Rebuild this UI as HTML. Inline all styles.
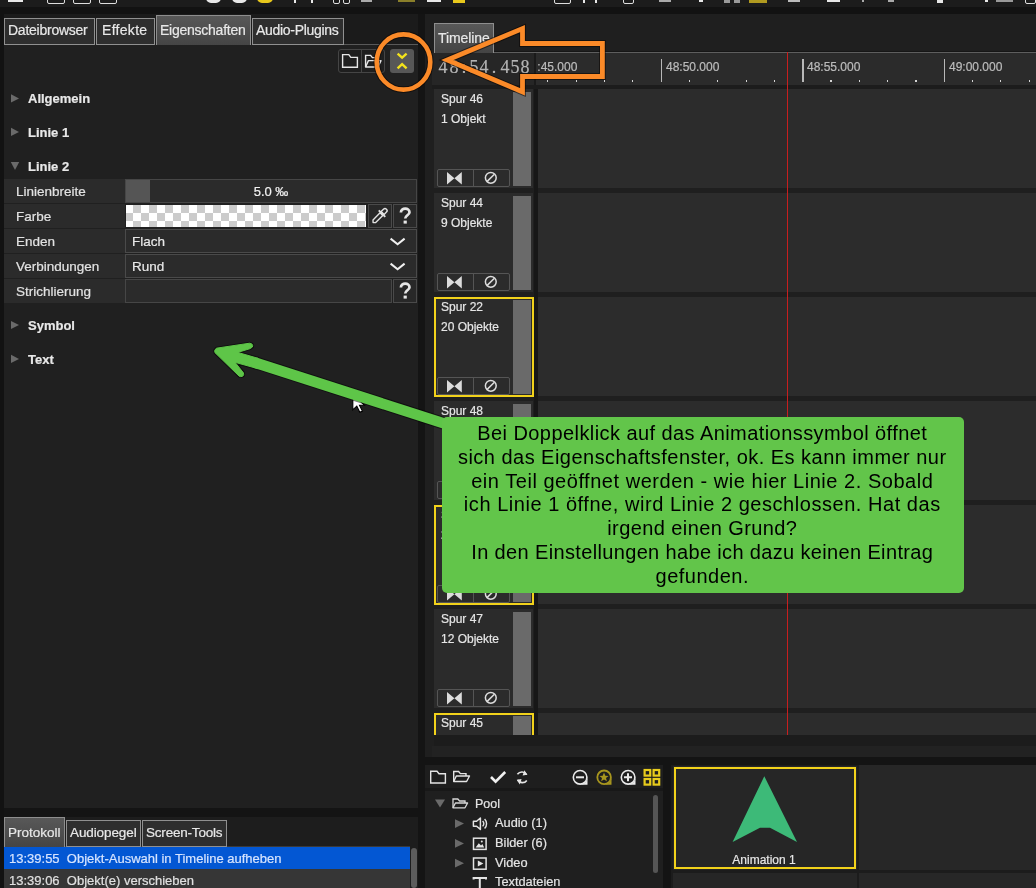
<!DOCTYPE html>
<html><head><meta charset="utf-8"><title>recreation</title><style>
*{margin:0;padding:0;box-sizing:border-box}
html,body{width:1036px;height:888px;overflow:hidden;background:#141414;font-family:"Liberation Sans",sans-serif;color:#e2e2e2}
.a{position:absolute}
.t{white-space:nowrap;will-change:transform;-webkit-text-stroke:0.2px currentColor}
.c{-webkit-text-stroke:0}
svg{position:absolute;overflow:visible}
</style></head><body>

<div class="a" style="left:0px;top:0px;width:1036px;height:7px;background:#1c1c1c"></div>
<div class="a" style="left:0px;top:7px;width:1036px;height:7px;background:#121212"></div>
<div class="a" style="left:8px;top:0px;width:15px;height:1.5px;background:#e8e8e8"></div>
<div class="a" style="left:47px;top:-4px;width:18px;height:8px;border:1.5px solid #dedede;border-radius:2px"></div>
<div class="a" style="left:73px;top:-4px;width:18px;height:8px;border:1.5px solid #dedede;border-radius:2px"></div>
<div class="a" style="left:99px;top:-4px;width:18px;height:8px;border:1.5px solid #dedede;border-radius:2px"></div>
<div class="a" style="left:206px;top:-6px;width:15px;height:9px;border:3px solid #e8e8e8;border-radius:0 0 5px 5px"></div>
<div class="a" style="left:232px;top:-6px;width:15px;height:9px;border:3px solid #e8e8e8;border-radius:0 0 5px 5px"></div>
<div class="a" style="left:257px;top:-6px;width:16px;height:9px;border:3px solid #e8c81c;border-radius:0 0 5px 5px"></div>
<div class="a" style="left:294px;top:0px;width:1.5px;height:3px;background:#e8e8e8"></div>
<div class="a" style="left:311px;top:0px;width:1.5px;height:3px;background:#e8e8e8"></div>
<div class="a" style="left:333px;top:-4px;width:7px;height:8px;border:1.5px solid #dedede;border-radius:2px"></div>
<div class="a" style="left:343px;top:-4px;width:7px;height:8px;border:1.5px solid #dedede;border-radius:2px"></div>
<div class="a" style="left:361px;top:0px;width:11px;height:1.5px;background:#aaaaaa"></div>
<div class="a" style="left:398px;top:0px;width:17px;height:1.5px;background:#8a7f2a"></div>
<div class="a" style="left:427px;top:0px;width:14px;height:2px;background:#e8e8e8"></div>
<div class="a" style="left:453px;top:0px;width:12px;height:3px;background:#e8c81c"></div>
<div class="a" style="left:554px;top:-4px;width:17px;height:8px;border:1.5px solid #dedede;border-radius:2px"></div>
<div class="a" style="left:583px;top:0px;width:1.5px;height:3px;background:#e8e8e8"></div>
<div class="a" style="left:595px;top:0px;width:1.5px;height:3px;background:#e8e8e8"></div>
<div class="a" style="left:623px;top:-4px;width:11px;height:8px;border:1.5px solid #dedede;border-radius:2px"></div>
<div class="a" style="left:659px;top:0px;width:12px;height:1.5px;background:#aaaaaa"></div>
<div class="a" style="left:699px;top:0px;width:4px;height:2px;background:#e8e8e8"></div>
<div class="a" style="left:724px;top:0px;width:6px;height:3px;background:#9a9a9a"></div>
<div class="a" style="left:734px;top:0px;width:6px;height:3px;background:#9a9a9a"></div>
<div class="a" style="left:749px;top:0px;width:18px;height:3px;background:#b09a20"></div>
<div class="a" style="left:788px;top:0px;width:12px;height:1.5px;background:#bbbbbb"></div>
<div class="a" style="left:827px;top:0px;width:13px;height:2px;background:#e8e8e8"></div>
<div class="a" style="left:862px;top:0px;width:2px;height:1.5px;background:#aaaaaa"></div>
<div class="a" style="left:888px;top:0px;width:6px;height:2px;background:#aaaaaa"></div>
<div class="a" style="left:937px;top:0px;width:6px;height:3px;background:#e8e8e8"></div>
<div class="a" style="left:985px;top:0px;width:3px;height:2px;background:#e8e8e8"></div>
<div class="a" style="left:996px;top:0px;width:17px;height:1.5px;background:#999999"></div>
<div class="a" style="left:1025px;top:-4px;width:11px;height:8px;border:1.5px solid #dedede;border-radius:2px"></div>
<div class="a" style="left:0px;top:14px;width:4px;height:874px;background:#121212"></div>
<div class="a" style="left:4px;top:14px;width:414px;height:794px;background:#202020"></div>
<div class="a" style="left:4px;top:14px;width:414px;height:30px;background:#1b1b1b"></div>
<div class="a" style="left:4px;top:18px;width:91px;height:27px;background:#2e2e2e;border:1px solid #909090"></div>
<div class="a t" style="left:8px;top:23.15px;font-size:14px;line-height:14px;text-align:left;color:#e8e8e8;letter-spacing:-0.25px">Dateibrowser</div>
<div class="a" style="left:96px;top:18px;width:59px;height:27px;background:#2e2e2e;border:1px solid #909090"></div>
<div class="a t" style="left:101.8px;top:23.15px;font-size:14px;line-height:14px;text-align:left;color:#e8e8e8;letter-spacing:0.3px">Effekte</div>
<div class="a" style="left:156px;top:15px;width:95px;height:30px;background:linear-gradient(#585858,#454545);border:1px solid #8e8e8e;border-bottom:none"></div>
<div class="a t" style="left:160px;top:23.15px;font-size:14px;line-height:14px;text-align:left;color:#e8e8e8;letter-spacing:-0.25px">Eigenschaften</div>
<div class="a" style="left:252px;top:18px;width:92px;height:27px;background:#2e2e2e;border:1px solid #909090"></div>
<div class="a t" style="left:256px;top:23.15px;font-size:14px;line-height:14px;text-align:left;color:#e8e8e8;letter-spacing:-0.3px">Audio-Plugins</div>
<div class="a" style="left:344px;top:44px;width:74px;height:1px;background:#595959"></div>
<div class="a" style="left:338px;top:49px;width:47px;height:24px;border:1px solid #454545;border-radius:3px;background:#1f1f1f"></div>
<div class="a" style="left:361px;top:49px;width:1px;height:24px;background:#454545"></div>
<div class="a" style="left:390px;top:49px;width:24px;height:24px;background:#575757;border-radius:3px"></div>
<svg style="left:0;top:0" width="1036" height="888"><path d="M342.6 54.6 H348.8 L350.8 57.4 H357.4 V67.2 H342.6 Z" fill="none" stroke="#e6e6e6" stroke-width="1.4"/><path d="M365.6 67 V55.4 H370.6 L372.4 57.6 H378 V60.6" fill="none" stroke="#e6e6e6" stroke-width="1.4"/><path d="M365.6 67 L368.4 60.6 H381 L378 67 Z" fill="none" stroke="#e6e6e6" stroke-width="1.4" stroke-linejoin="round"/><path d="M397.6 53.6 L402.1 57.6 L406.6 53.6 M397.6 68.4 L402.1 64.2 L406.6 68.4" fill="none" stroke="#f2e21c" stroke-width="2.4"/></svg>
<svg style="left:0;top:0" width="1036" height="888"><path d="M11 94.2 L19 98.4 L11 102.4 Z" fill="#6a6a6a"/></svg>
<div class="a t" style="left:28px;top:92.00px;font-size:13px;line-height:13px;text-align:left;font-weight:bold;color:#e8e8e8">Allgemein</div>
<svg style="left:0;top:0" width="1036" height="888"><path d="M11 127.7 L19 131.9 L11 135.9 Z" fill="#6a6a6a"/></svg>
<div class="a t" style="left:28px;top:125.50px;font-size:13px;line-height:13px;text-align:left;font-weight:bold;color:#e8e8e8">Linie 1</div>
<svg style="left:0;top:0" width="1036" height="888"><path d="M10.8 161.9 H19.2 L15 170.1 Z" fill="#6a6a6a"/></svg>
<div class="a t" style="left:28px;top:159.50px;font-size:13px;line-height:13px;text-align:left;font-weight:bold;color:#e8e8e8">Linie 2</div>
<svg style="left:0;top:0" width="1036" height="888"><path d="M11 320.9 L19 325.09999999999997 L11 329.09999999999997 Z" fill="#6a6a6a"/></svg>
<div class="a t" style="left:28px;top:318.70px;font-size:13px;line-height:13px;text-align:left;font-weight:bold;color:#e8e8e8">Symbol</div>
<svg style="left:0;top:0" width="1036" height="888"><path d="M11 354.7 L19 358.9 L11 362.9 Z" fill="#6a6a6a"/></svg>
<div class="a t" style="left:28px;top:352.50px;font-size:13px;line-height:13px;text-align:left;font-weight:bold;color:#e8e8e8">Text</div>
<div class="a" style="left:4px;top:179px;width:121px;height:24px;background:#2b2b2b"></div>
<div class="a t" style="left:15.5px;top:184.87px;font-size:13.5px;line-height:13.5px;text-align:left;color:#e2e2e2">Linienbreite</div>
<div class="a" style="left:4px;top:204px;width:121px;height:24px;background:#2b2b2b"></div>
<div class="a t" style="left:15.5px;top:209.87px;font-size:13.5px;line-height:13.5px;text-align:left;color:#e2e2e2">Farbe</div>
<div class="a" style="left:4px;top:229px;width:121px;height:24px;background:#2b2b2b"></div>
<div class="a t" style="left:15.5px;top:234.87px;font-size:13.5px;line-height:13.5px;text-align:left;color:#e2e2e2">Enden</div>
<div class="a" style="left:4px;top:254px;width:121px;height:24px;background:#2b2b2b"></div>
<div class="a t" style="left:15.5px;top:259.87px;font-size:13.5px;line-height:13.5px;text-align:left;color:#e2e2e2">Verbindungen</div>
<div class="a" style="left:4px;top:279px;width:121px;height:24px;background:#2b2b2b"></div>
<div class="a t" style="left:15.5px;top:284.87px;font-size:13.5px;line-height:13.5px;text-align:left;color:#e2e2e2">Strichlierung</div>
<div class="a" style="left:125px;top:179px;width:292px;height:24px;background:#2b2b2b;border:1px solid #464646"></div>
<div class="a" style="left:126px;top:180px;width:24px;height:22px;background:#555555"></div>
<div class="a t" style="left:125px;top:184.80px;font-size:13px;line-height:13px;text-align:center;width:292px;color:#f2f2f2">5.0 &#8240;</div>
<svg style="left:126px;top:205px" width="240" height="22"><defs><pattern id="ck" x="-1" y="0" width="16" height="16" patternUnits="userSpaceOnUse"><rect width="16" height="16" fill="#ffffff"/><rect x="8" y="0" width="8" height="8" fill="#cbcbcb"/><rect x="0" y="8" width="8" height="8" fill="#cbcbcb"/></pattern></defs><rect width="240" height="22" fill="url(#ck)"/></svg>
<div class="a" style="left:368px;top:204px;width:24px;height:24px;background:#282828;border:1px solid #4a4a4a"></div>
<div class="a" style="left:393px;top:204px;width:24px;height:24px;background:#282828;border:1px solid #4a4a4a"></div>
<svg style="left:0;top:0" width="1036" height="888"><g transform="translate(382,213.6) rotate(-45)"><path d="M-12.6 0 L-10.8 -1.9 H-0.8 V1.9 H-10.8 Z" fill="none" stroke="#e2e2e2" stroke-width="1.4" stroke-linejoin="round"/><path d="M0 -4.6 V4.6" stroke="#e2e2e2" stroke-width="1.9"/><path d="M0.9 -2.1 H4.2 A2.1 2.1 0 0 1 4.2 2.1 H0.9 Z" fill="none" stroke="#e2e2e2" stroke-width="1.4"/></g></svg>
<svg style="left:0;top:0" width="1036" height="888"><path d="M400.9 212.6 C400.9 207.4 409.5 207.4 409.5 212.2 C409.5 215.2 405.2 215.4 405.2 218.6" fill="none" stroke="#e6e6e6" stroke-width="2.7"/><rect x="403.6" y="220.6" width="3.2" height="3" fill="#e6e6e6"/></svg>
<div class="a" style="left:125px;top:229px;width:292px;height:24px;background:#2b2b2b;border:1px solid #4a4a4a"></div>
<div class="a t" style="left:131.5px;top:234.57px;font-size:13.5px;line-height:13.5px;text-align:left;color:#e8e8e8">Flach</div>
<svg style="left:0;top:0" width="1036" height="888"><path d="M390.6 238.6 L397.6 244.2 L404.6 238.6" fill="none" stroke="#f0f0f0" stroke-width="2"/></svg>
<div class="a" style="left:125px;top:254px;width:292px;height:24px;background:#2b2b2b;border:1px solid #4a4a4a"></div>
<div class="a t" style="left:131.5px;top:259.57px;font-size:13.5px;line-height:13.5px;text-align:left;color:#e8e8e8">Rund</div>
<svg style="left:0;top:0" width="1036" height="888"><path d="M390.6 263.6 L397.6 269.2 L404.6 263.6" fill="none" stroke="#f0f0f0" stroke-width="2"/></svg>
<div class="a" style="left:125px;top:279px;width:267px;height:24px;background:#2b2b2b;border:1px solid #464646"></div>
<div class="a" style="left:393px;top:279px;width:24px;height:24px;background:#282828;border:1px solid #4a4a4a"></div>
<svg style="left:0;top:0" width="1036" height="888"><path d="M400.9 287.6 C400.9 282.4 409.5 282.4 409.5 287.2 C409.5 290.2 405.2 290.4 405.2 293.6" fill="none" stroke="#e6e6e6" stroke-width="2.7"/><rect x="403.6" y="295.6" width="3.2" height="3" fill="#e6e6e6"/></svg>
<div class="a" style="left:4px;top:817px;width:414px;height:71px;background:#1d1d1d"></div>
<div class="a" style="left:4px;top:846px;width:406px;height:1px;background:#3a3a3a"></div>
<div class="a" style="left:4px;top:817px;width:61px;height:30px;background:linear-gradient(#585858,#454545);border:1px solid #8e8e8e;border-bottom:none"></div>
<div class="a t" style="left:8px;top:826.07px;font-size:13.5px;line-height:13.5px;text-align:left;color:#e8e8e8">Protokoll</div>
<div class="a" style="left:66px;top:820px;width:75px;height:27px;background:#2e2e2e;border:1px solid #909090"></div>
<div class="a t" style="left:70px;top:826.07px;font-size:13.5px;line-height:13.5px;text-align:left;color:#e8e8e8;letter-spacing:-0.1px">Audiopegel</div>
<div class="a" style="left:142px;top:820px;width:85px;height:27px;background:#2e2e2e;border:1px solid #909090"></div>
<div class="a t" style="left:146px;top:826.07px;font-size:13.5px;line-height:13.5px;text-align:left;color:#e8e8e8;letter-spacing:-0.2px">Screen-Tools</div>
<div class="a" style="left:4px;top:847px;width:406px;height:22px;background:#0357d3"></div>
<div class="a t" style="left:8.5px;top:852.20px;font-size:13px;line-height:13px;text-align:left;color:#d6e4ff">13:39:55&nbsp;&nbsp;Objekt-Auswahl in Timeline aufheben</div>
<div class="a" style="left:4px;top:869px;width:406px;height:19px;background:#363636"></div>
<div class="a t" style="left:8.5px;top:874.30px;font-size:13px;line-height:13px;text-align:left;color:#e0e0e0">13:39:06&nbsp;&nbsp;Objekt(e) verschieben</div>
<div class="a" style="left:411px;top:848px;width:6px;height:40px;background:#5c5c5c;border-radius:3px"></div>
<div class="a" style="left:425px;top:14px;width:611px;height:743px;background:#1f1f1f"></div>
<div class="a" style="left:434px;top:23px;width:60px;height:30px;background:linear-gradient(#585858,#444444);border:1px solid #8e8e8e;border-bottom:none"></div>
<div class="a t" style="left:438px;top:30.65px;font-size:14px;line-height:14px;text-align:left;color:#e8e8e8;letter-spacing:-0.1px">Timeline</div>
<div class="a" style="left:494px;top:51px;width:542px;height:1px;background:#161616"></div>
<div class="a" style="left:494px;top:52px;width:542px;height:1px;background:#5e5e5e"></div>
<div class="a" style="left:432px;top:53px;width:604px;height:32px;background:#2b2b2b"></div>
<div class="a" style="left:432px;top:53px;width:102px;height:32px;background:#262626"></div>
<div class="a" style="left:534px;top:53px;width:2px;height:32px;background:#1a1a1a"></div>
<div class="a t" style="left:437.3px;top:57.86px;width:12px;text-align:center;font-family:'Liberation Serif',serif;font-size:18px;line-height:18px;color:#b4b4b4">4</div>
<div class="a t" style="left:447.5px;top:57.86px;width:12px;text-align:center;font-family:'Liberation Serif',serif;font-size:18px;line-height:18px;color:#b4b4b4">8</div>
<div class="a t" style="left:457.7px;top:57.86px;width:12px;text-align:center;font-family:'Liberation Serif',serif;font-size:18px;line-height:18px;color:#b4b4b4">:</div>
<div class="a t" style="left:467.9px;top:57.86px;width:12px;text-align:center;font-family:'Liberation Serif',serif;font-size:18px;line-height:18px;color:#b4b4b4">5</div>
<div class="a t" style="left:478.1px;top:57.86px;width:12px;text-align:center;font-family:'Liberation Serif',serif;font-size:18px;line-height:18px;color:#b4b4b4">4</div>
<div class="a t" style="left:488.3px;top:57.86px;width:12px;text-align:center;font-family:'Liberation Serif',serif;font-size:18px;line-height:18px;color:#b4b4b4">.</div>
<div class="a t" style="left:498.5px;top:57.86px;width:12px;text-align:center;font-family:'Liberation Serif',serif;font-size:18px;line-height:18px;color:#b4b4b4">4</div>
<div class="a t" style="left:508.7px;top:57.86px;width:12px;text-align:center;font-family:'Liberation Serif',serif;font-size:18px;line-height:18px;color:#b4b4b4">5</div>
<div class="a t" style="left:518.9px;top:57.86px;width:12px;text-align:center;font-family:'Liberation Serif',serif;font-size:18px;line-height:18px;color:#b4b4b4">8</div>
<div class="a" style="left:538px;top:53px;width:498px;height:32px;overflow:hidden">
<div class="a" style="left:-47.4px;top:27px;width:1.2px;height:2px;background:#d4d4d4"></div>
<div class="a" style="left:-19.1px;top:6px;width:1.6px;height:23px;background:#b8b8b8"></div>
<div class="a" style="left:9.2px;top:27px;width:1.2px;height:2px;background:#d4d4d4"></div>
<div class="a" style="left:37.5px;top:27px;width:1.2px;height:2px;background:#d4d4d4"></div>
<div class="a" style="left:65.9px;top:27px;width:1.2px;height:2px;background:#d4d4d4"></div>
<div class="a" style="left:94.2px;top:27px;width:1.2px;height:2px;background:#d4d4d4"></div>
<div class="a" style="left:122.5px;top:6px;width:1.6px;height:23px;background:#b8b8b8"></div>
<div class="a" style="left:150.8px;top:27px;width:1.2px;height:2px;background:#d4d4d4"></div>
<div class="a" style="left:179.1px;top:27px;width:1.2px;height:2px;background:#d4d4d4"></div>
<div class="a" style="left:207.5px;top:27px;width:1.2px;height:2px;background:#d4d4d4"></div>
<div class="a" style="left:235.8px;top:27px;width:1.2px;height:2px;background:#d4d4d4"></div>
<div class="a" style="left:264.1px;top:6px;width:1.6px;height:23px;background:#b8b8b8"></div>
<div class="a" style="left:292.4px;top:27px;width:1.2px;height:2px;background:#d4d4d4"></div>
<div class="a" style="left:320.7px;top:27px;width:1.2px;height:2px;background:#d4d4d4"></div>
<div class="a" style="left:349.1px;top:27px;width:1.2px;height:2px;background:#d4d4d4"></div>
<div class="a" style="left:377.4px;top:27px;width:1.2px;height:2px;background:#d4d4d4"></div>
<div class="a" style="left:405.7px;top:6px;width:1.6px;height:23px;background:#b8b8b8"></div>
<div class="a" style="left:434.0px;top:27px;width:1.2px;height:2px;background:#d4d4d4"></div>
<div class="a" style="left:462.3px;top:27px;width:1.2px;height:2px;background:#d4d4d4"></div>
<div class="a" style="left:490.7px;top:27px;width:1.2px;height:2px;background:#d4d4d4"></div>
<div class="a t" style="left:-13.9px;top:7.84px;font-size:12px;line-height:12px;color:#bcbcbc">48:45.000</div>
<div class="a t" style="left:127.7px;top:7.84px;font-size:12px;line-height:12px;color:#bcbcbc">48:50.000</div>
<div class="a t" style="left:269.3px;top:7.84px;font-size:12px;line-height:12px;color:#bcbcbc">48:55.000</div>
<div class="a t" style="left:410.9px;top:7.84px;font-size:12px;line-height:12px;color:#bcbcbc">49:00.000</div>
</div>
<div class="a" style="left:432px;top:85px;width:604px;height:4px;background:#1c1c1c"></div>
<div class="a" style="left:425px;top:89px;width:611px;height:646px;overflow:hidden">
<div class="a" style="left:9px;top:0px;width:99px;height:99px;background:#2b2b2b"></div>
<div class="a" style="left:88px;top:3px;width:18px;height:94px;background:#6a6a6a"></div>
<div class="a" style="left:11.5px;top:80px;width:73.5px;height:18px;border:1px solid #555555;border-radius:2px"></div>
<div class="a" style="left:47.5px;top:80px;width:1px;height:18px;background:#555555"></div>
<svg style="left:22px;top:83px" width="16" height="13"><path d="M0 0 L7.4 6.2 L0 12.4 Z M14.8 0 L7.4 6.2 L14.8 12.4 Z" fill="#dcdcdc"/></svg>
<svg style="left:59px;top:82px" width="14" height="14"><circle cx="6.8" cy="6.8" r="5.4" fill="none" stroke="#dcdcdc" stroke-width="1.5"/><path d="M3.2 10.4 L10.4 3.2" stroke="#dcdcdc" stroke-width="1.5"/></svg>
<div class="a t" style="left:16px;top:3.84px;font-size:12px;line-height:12px;color:#e6e6e6">Spur 46</div>
<div class="a t" style="left:16px;top:23.84px;font-size:12px;line-height:12px;color:#e6e6e6">1 Objekt</div>
<div class="a" style="left:111px;top:0px;width:500px;height:99px;background:#2c2c2c"></div>
<div class="a" style="left:9px;top:104px;width:99px;height:99px;background:#2b2b2b"></div>
<div class="a" style="left:88px;top:107px;width:18px;height:94px;background:#6a6a6a"></div>
<div class="a" style="left:11.5px;top:184px;width:73.5px;height:18px;border:1px solid #555555;border-radius:2px"></div>
<div class="a" style="left:47.5px;top:184px;width:1px;height:18px;background:#555555"></div>
<svg style="left:22px;top:187px" width="16" height="13"><path d="M0 0 L7.4 6.2 L0 12.4 Z M14.8 0 L7.4 6.2 L14.8 12.4 Z" fill="#dcdcdc"/></svg>
<svg style="left:59px;top:186px" width="14" height="14"><circle cx="6.8" cy="6.8" r="5.4" fill="none" stroke="#dcdcdc" stroke-width="1.5"/><path d="M3.2 10.4 L10.4 3.2" stroke="#dcdcdc" stroke-width="1.5"/></svg>
<div class="a t" style="left:16px;top:107.84px;font-size:12px;line-height:12px;color:#e6e6e6">Spur 44</div>
<div class="a t" style="left:16px;top:127.84px;font-size:12px;line-height:12px;color:#e6e6e6">9 Objekte</div>
<div class="a" style="left:111px;top:104px;width:500px;height:99px;background:#2c2c2c"></div>
<div class="a" style="left:9px;top:208px;width:99px;height:99px;background:#2b2b2b"></div>
<div class="a" style="left:88px;top:211px;width:18px;height:94px;background:#6a6a6a"></div>
<div class="a" style="left:11.5px;top:288px;width:73.5px;height:18px;border:1px solid #555555;border-radius:2px"></div>
<div class="a" style="left:47.5px;top:288px;width:1px;height:18px;background:#555555"></div>
<svg style="left:22px;top:291px" width="16" height="13"><path d="M0 0 L7.4 6.2 L0 12.4 Z M14.8 0 L7.4 6.2 L14.8 12.4 Z" fill="#dcdcdc"/></svg>
<svg style="left:59px;top:290px" width="14" height="14"><circle cx="6.8" cy="6.8" r="5.4" fill="none" stroke="#dcdcdc" stroke-width="1.5"/><path d="M3.2 10.4 L10.4 3.2" stroke="#dcdcdc" stroke-width="1.5"/></svg>
<div class="a t" style="left:16px;top:211.84px;font-size:12px;line-height:12px;color:#e6e6e6">Spur 22</div>
<div class="a t" style="left:16px;top:231.84px;font-size:12px;line-height:12px;color:#e6e6e6">20 Objekte</div>
<div class="a" style="left:9px;top:208px;width:100px;height:100px;border:2px solid #f2d21b"></div>
<div class="a" style="left:111px;top:208px;width:500px;height:99px;background:#2c2c2c"></div>
<div class="a" style="left:9px;top:312px;width:99px;height:99px;background:#2b2b2b"></div>
<div class="a" style="left:88px;top:315px;width:18px;height:94px;background:#6a6a6a"></div>
<div class="a" style="left:11.5px;top:392px;width:73.5px;height:18px;border:1px solid #555555;border-radius:2px"></div>
<div class="a" style="left:47.5px;top:392px;width:1px;height:18px;background:#555555"></div>
<svg style="left:22px;top:395px" width="16" height="13"><path d="M0 0 L7.4 6.2 L0 12.4 Z M14.8 0 L7.4 6.2 L14.8 12.4 Z" fill="#dcdcdc"/></svg>
<svg style="left:59px;top:394px" width="14" height="14"><circle cx="6.8" cy="6.8" r="5.4" fill="none" stroke="#dcdcdc" stroke-width="1.5"/><path d="M3.2 10.4 L10.4 3.2" stroke="#dcdcdc" stroke-width="1.5"/></svg>
<div class="a t" style="left:16px;top:315.84px;font-size:12px;line-height:12px;color:#e6e6e6">Spur 48</div>
<div class="a" style="left:111px;top:312px;width:500px;height:99px;background:#2c2c2c"></div>
<div class="a" style="left:9px;top:416px;width:99px;height:99px;background:#2b2b2b"></div>
<div class="a" style="left:88px;top:419px;width:18px;height:94px;background:#6a6a6a"></div>
<div class="a" style="left:11.5px;top:496px;width:73.5px;height:18px;border:1px solid #555555;border-radius:2px"></div>
<div class="a" style="left:47.5px;top:496px;width:1px;height:18px;background:#555555"></div>
<svg style="left:22px;top:499px" width="16" height="13"><path d="M0 0 L7.4 6.2 L0 12.4 Z M14.8 0 L7.4 6.2 L14.8 12.4 Z" fill="#dcdcdc"/></svg>
<svg style="left:59px;top:498px" width="14" height="14"><circle cx="6.8" cy="6.8" r="5.4" fill="none" stroke="#dcdcdc" stroke-width="1.5"/><path d="M3.2 10.4 L10.4 3.2" stroke="#dcdcdc" stroke-width="1.5"/></svg>
<div class="a t" style="left:16px;top:419.84px;font-size:12px;line-height:12px;color:#e6e6e6">Spur 21</div>
<div class="a t" style="left:16px;top:439.84px;font-size:12px;line-height:12px;color:#e6e6e6">2 Objekte</div>
<div class="a" style="left:9px;top:416px;width:100px;height:100px;border:2px solid #f2d21b"></div>
<div class="a" style="left:111px;top:416px;width:500px;height:99px;background:#2c2c2c"></div>
<div class="a" style="left:9px;top:520px;width:99px;height:99px;background:#2b2b2b"></div>
<div class="a" style="left:88px;top:523px;width:18px;height:94px;background:#6a6a6a"></div>
<div class="a" style="left:11.5px;top:600px;width:73.5px;height:18px;border:1px solid #555555;border-radius:2px"></div>
<div class="a" style="left:47.5px;top:600px;width:1px;height:18px;background:#555555"></div>
<svg style="left:22px;top:603px" width="16" height="13"><path d="M0 0 L7.4 6.2 L0 12.4 Z M14.8 0 L7.4 6.2 L14.8 12.4 Z" fill="#dcdcdc"/></svg>
<svg style="left:59px;top:602px" width="14" height="14"><circle cx="6.8" cy="6.8" r="5.4" fill="none" stroke="#dcdcdc" stroke-width="1.5"/><path d="M3.2 10.4 L10.4 3.2" stroke="#dcdcdc" stroke-width="1.5"/></svg>
<div class="a t" style="left:16px;top:523.84px;font-size:12px;line-height:12px;color:#e6e6e6">Spur 47</div>
<div class="a t" style="left:16px;top:543.84px;font-size:12px;line-height:12px;color:#e6e6e6">12 Objekte</div>
<div class="a" style="left:111px;top:520px;width:500px;height:99px;background:#2c2c2c"></div>
<div class="a" style="left:9px;top:624px;width:99px;height:99px;background:#2b2b2b"></div>
<div class="a" style="left:88px;top:627px;width:18px;height:94px;background:#6a6a6a"></div>
<div class="a" style="left:11.5px;top:704px;width:73.5px;height:18px;border:1px solid #555555;border-radius:2px"></div>
<div class="a" style="left:47.5px;top:704px;width:1px;height:18px;background:#555555"></div>
<svg style="left:22px;top:707px" width="16" height="13"><path d="M0 0 L7.4 6.2 L0 12.4 Z M14.8 0 L7.4 6.2 L14.8 12.4 Z" fill="#dcdcdc"/></svg>
<svg style="left:59px;top:706px" width="14" height="14"><circle cx="6.8" cy="6.8" r="5.4" fill="none" stroke="#dcdcdc" stroke-width="1.5"/><path d="M3.2 10.4 L10.4 3.2" stroke="#dcdcdc" stroke-width="1.5"/></svg>
<div class="a t" style="left:16px;top:627.84px;font-size:12px;line-height:12px;color:#e6e6e6">Spur 45</div>
<div class="a" style="left:9px;top:624px;width:100px;height:100px;border:2px solid #f2d21b"></div>
<div class="a" style="left:111px;top:624px;width:500px;height:99px;background:#2c2c2c"></div>
</div>
<div class="a" style="left:533.5px;top:89px;width:4px;height:646px;background:#171717"></div>
<div class="a" style="left:434px;top:735px;width:602px;height:11px;background:#1c1c1c"></div>
<div class="a" style="left:432px;top:746px;width:604px;height:11px;background:#222222"></div>
<div class="a" style="left:787px;top:52px;width:1px;height:683px;background:#c81e1e"></div>
<div class="a" style="left:425px;top:765px;width:238px;height:123px;background:#1f1f1f"></div>
<div class="a" style="left:425px;top:765px;width:238px;height:23px;background:#1e1e1e"></div>
<div class="a" style="left:425px;top:788px;width:238px;height:3px;background:#181818"></div>
<div class="a" style="left:671px;top:765px;width:365px;height:123px;background:#1c1c1c"></div>
<div class="a" style="left:673px;top:766px;width:184px;height:104px;background:#262626"></div>
<div class="a" style="left:859px;top:765px;width:177px;height:105px;background:#272727"></div>
<div class="a" style="left:673px;top:873px;width:184px;height:15px;background:#262626"></div>
<div class="a" style="left:859px;top:873px;width:177px;height:15px;background:#272727"></div>
<div class="a" style="left:674px;top:767px;width:182px;height:102px;border:2px solid #f2d21b"></div>
<svg style="left:0;top:0" width="1036" height="888"><path d="M764.3 776.2 L797 842 L770 827.7 L760 827.7 L732.6 842 Z" fill="#3dba78"/></svg>
<div class="a t" style="left:671px;top:853.54px;font-size:12px;line-height:12px;text-align:center;width:186px;color:#e6e6e6">Animation 1</div>
<svg style="left:0;top:0" width="1036" height="888"><path d="M430.7 771.2 H437 L439 773.8 H445.4 V783 H430.7 Z" fill="none" stroke="#e4e4e4" stroke-width="1.4"/><path d="M453.7 781.5 V771.5 H458.6 L460.4 773.6 H466 V776" fill="none" stroke="#e4e4e4" stroke-width="1.4"/><path d="M453.7 781.5 L456.3 776 H469.5 L466.6 781.5 Z" fill="none" stroke="#e4e4e4" stroke-width="1.4" stroke-linejoin="round"/><path d="M491 777 L495.6 781.6 L505.2 772" fill="none" stroke="#f0f0f0" stroke-width="2.6"/><path d="M526.6 774.6 A5.6 5.6 0 0 0 517.4 774.2 M517.6 780 A5.6 5.6 0 0 0 526.8 780.4" fill="none" stroke="#e4e4e4" stroke-width="1.6"/><path d="M524.4 770.2 L527.4 774.8 L522.6 775.6 Z M519.8 784.4 L516.8 779.8 L521.6 779 Z" fill="#e4e4e4"/><path d="M587.5 777.3 V784.7 H580 A7.4 7.4 0 0 0 587.5 777.3 Z" fill="#eaeaea"/><circle cx="580.1" cy="777.3" r="6.8" fill="none" stroke="#eaeaea" stroke-width="1.6"/><path d="M576 777.3 H584" stroke="#eaeaea" stroke-width="2"/><path d="M611.5 777.3 V784.7 H604 A7.4 7.4 0 0 0 611.5 777.3 Z" fill="#a8961e"/><circle cx="604.1" cy="777.3" r="6.8" fill="none" stroke="#a8961e" stroke-width="1.8"/><path d="M604 772.6 L605.3 775.8 L608.6 775.9 L606 778 L606.9 781.2 L604 779.4 L601.1 781.2 L602 778 L599.4 775.9 L602.7 775.8 Z" fill="#a8961e"/><path d="M635.5 777.3 V784.7 H628 A7.4 7.4 0 0 0 635.5 777.3 Z" fill="#eaeaea"/><circle cx="628.1" cy="777.3" r="6.8" fill="none" stroke="#eaeaea" stroke-width="1.6"/><path d="M624 777.3 H632 M628 773.3 V781.3" stroke="#eaeaea" stroke-width="2"/><rect x="644.6" y="770" width="5.6" height="5.6" fill="none" stroke="#e8cc1c" stroke-width="2.2"/><rect x="653.6" y="770" width="5.6" height="5.6" fill="none" stroke="#e8cc1c" stroke-width="2.2"/><rect x="644.6" y="779" width="5.6" height="5.6" fill="none" stroke="#e8cc1c" stroke-width="2.2"/><rect x="653.6" y="779" width="5.6" height="5.6" fill="none" stroke="#e8cc1c" stroke-width="2.2"/></svg>
<svg style="left:0;top:0" width="1036" height="888"><path d="M435 799.5 H445 L440 807.5 Z" fill="#6a6a6a"/><path d="M455 819.2 L464 823.6 L455 828 Z M455 839 L464 843.4 L455 847.8 Z M455 858.8 L464 863.2 L455 867.6 Z" fill="#6a6a6a"/><path d="M453 807.8 V799 H457.8 L459.6 801 H465 V803" fill="none" stroke="#d8d8d8" stroke-width="1.3"/><path d="M453 807.8 L455.4 803 H467.6 L465 807.8 Z" fill="none" stroke="#d8d8d8" stroke-width="1.3" stroke-linejoin="round"/><path d="M473.4 821.2 H476.6 L480.4 818 V829.4 L476.6 826.2 H473.4 Z" fill="none" stroke="#e4e4e4" stroke-width="1.5" stroke-linejoin="round"/><path d="M482.6 821 A4 4 0 0 1 482.6 826.4 M484.6 819 A6.6 6.6 0 0 1 484.6 828.4" fill="none" stroke="#e4e4e4" stroke-width="1.4"/><rect x="473.5" y="838.2" width="12.6" height="11.2" fill="none" stroke="#e4e4e4" stroke-width="1.5"/><path d="M475.6 847.4 L478.8 843.2 L481 845.4 L482.4 844 L484.2 847.4 Z" fill="#e4e4e4"/><circle cx="481.8" cy="841.4" r="1" fill="#e4e4e4"/><rect x="473.5" y="858" width="12.6" height="11.2" fill="none" stroke="#e4e4e4" stroke-width="1.5"/><path d="M477.8 860.6 L483.4 863.6 L477.8 866.6 Z" fill="#e4e4e4"/><path d="M473.6 879.6 V878 H486 V879.6 M479.8 878 V888" fill="none" stroke="#e4e4e4" stroke-width="2"/></svg>
<div class="a t" style="left:475px;top:797.62px;font-size:12.5px;line-height:12.5px;text-align:left;color:#e4e4e4">Pool</div>
<div class="a t" style="left:495px;top:817.46px;font-size:12.8px;line-height:12.8px;text-align:left;color:#e4e4e4">Audio (1)</div>
<div class="a t" style="left:495px;top:837.06px;font-size:12.8px;line-height:12.8px;text-align:left;color:#e4e4e4">Bilder (6)</div>
<div class="a t" style="left:495px;top:856.76px;font-size:12.8px;line-height:12.8px;text-align:left;color:#e4e4e4">Video</div>
<div class="a t" style="left:495px;top:876.46px;font-size:12.8px;line-height:12.8px;text-align:left;color:#e4e4e4">Textdateien</div>
<div class="a" style="left:653px;top:795px;width:5px;height:78px;background:#555555;border-radius:3px"></div>
<svg style="left:0;top:0" width="1036" height="888"><path transform="translate(352.8,393.8)" d="M0 0 L0 16 L4 12.4 L7 18.4 L9.6 17.3 L6.7 11.4 L11.6 11.4 Z" fill="#ffffff" stroke="#000000" stroke-width="1.1" stroke-linejoin="miter"/></svg>
<svg style="left:0;top:0" width="1036" height="888"><g opacity="0.55"><ellipse cx="403.5" cy="62" rx="26.8" ry="27.6" fill="none" stroke="#0a0400" stroke-width="6.6"/><path d="M447.3 60 L522.5 28.5 L522.5 43.5 L602.4 43.5 L602.4 76.5 L522.5 76.5 L522.5 91.8 Z" fill="none" stroke="#0a0400" stroke-width="6.8" stroke-linejoin="miter" stroke-miterlimit="20"/></g><ellipse cx="403.5" cy="62" rx="26.8" ry="27.6" fill="none" stroke="#fb8a28" stroke-width="4.6"/><path d="M447.3 60 L522.5 28.5 L522.5 43.5 L602.4 43.5 L602.4 76.5 L522.5 76.5 L522.5 91.8 Z" fill="none" stroke="#fb8a28" stroke-width="4.8" stroke-linejoin="miter" stroke-miterlimit="20"/></svg>
<svg style="left:0;top:0" width="1036" height="888"><g opacity="0.5"><path d="M255 362.6 L452 426" stroke="#000000" stroke-width="12.6" fill="none"/><path d="M214.7 350.4 L216.4 348.2 L249.6 343.2 Q253.6 343.8 252.4 347 L250.2 348.6 L237.7 352.4 L258 358.3 L258 368.7 L235 362.3 L243.4 372.8 Q244.6 376.8 240.2 376.6 L239 376 L214.9 352.6 Z" fill="#000000" stroke="#000000" stroke-width="3" stroke-linejoin="round"/></g><path d="M255 362.6 L452 426" stroke="#5ec548" stroke-width="10.6" fill="none"/><path d="M214.7 350.4 L216.4 348.2 L249.6 343.2 Q253.6 343.8 252.4 347 L250.2 348.6 L237.7 352.4 L258 358.3 L258 368.7 L235 362.3 L243.4 372.8 Q244.6 376.8 240.2 376.6 L239 376 L214.9 352.6 Z" fill="#5ec548" stroke="#5ec548" stroke-width="1" stroke-linejoin="round"/></svg>
<div class="a" style="left:441.6px;top:416.6px;width:522.6px;height:176.6px;background:#62c54a;border-radius:5px"></div>
<div class="a t" style="left:440.91499999999996px;top:422.87px;font-size:20px;line-height:20px;text-align:center;width:522.6px;color:#000000;-webkit-text-stroke:0;letter-spacing:0.43px">Bei Doppelklick auf das Animationssymbol öffnet</div>
<div class="a t" style="left:440.935px;top:447.27px;font-size:20px;line-height:20px;text-align:center;width:522.6px;color:#000000;-webkit-text-stroke:0;letter-spacing:0.47px">sich das Eigenschaftsfenster, ok. Es kann immer nur</div>
<div class="a t" style="left:440.965px;top:470.67px;font-size:20px;line-height:20px;text-align:center;width:522.6px;color:#000000;-webkit-text-stroke:0;letter-spacing:0.53px">ein Teil geöffnet werden - wie hier Linie 2. Sobald</div>
<div class="a t" style="left:440.96999999999997px;top:494.47px;font-size:20px;line-height:20px;text-align:center;width:522.6px;color:#000000;-webkit-text-stroke:0;letter-spacing:0.54px">ich Linie 1 öffne, wird Linie 2 geschlossen. Hat das</div>
<div class="a t" style="left:440.905px;top:518.17px;font-size:20px;line-height:20px;text-align:center;width:522.6px;color:#000000;-webkit-text-stroke:0;letter-spacing:0.41px">irgend einen Grund?</div>
<div class="a t" style="left:440.875px;top:542.17px;font-size:20px;line-height:20px;text-align:center;width:522.6px;color:#000000;-webkit-text-stroke:0;letter-spacing:0.35px">In den Einstellungen habe ich dazu keinen Eintrag</div>
<div class="a t" style="left:440.95px;top:565.97px;font-size:20px;line-height:20px;text-align:center;width:522.6px;color:#000000;-webkit-text-stroke:0;letter-spacing:0.5px">gefunden.</div>
</body></html>
